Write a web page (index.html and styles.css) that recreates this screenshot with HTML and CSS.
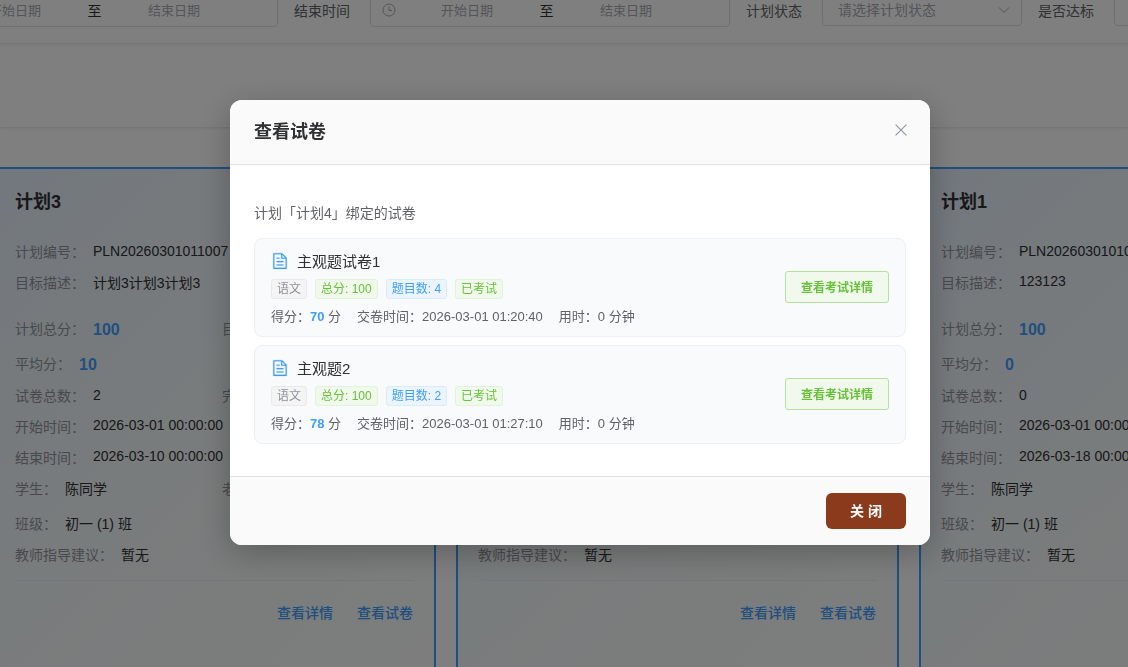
FILE: index.html
```html
<!DOCTYPE html>
<html lang="zh-CN">
<head>
    <meta charset="UTF-8">
    <meta name="viewport" content="width=device-width, initial-scale=1.0">
    <title>学习计划</title>
    <link rel="stylesheet" href="styles.css">
</head>
<body>
    <div class="page">
        <!-- 搜索栏 -->
        <div class="search-bar">
            <div class="date-range">
                <svg class="clock" viewBox="0 0 14 14"><circle cx="7" cy="7" r="6"/><path d="M7 3.5V7.5H10"/></svg>
                <span class="placeholder">开始日期</span>
                <span class="sep">至</span>
                <span class="placeholder">结束日期</span>
            </div>
            <label>结束时间</label>
            <div class="date-range">
                <svg class="clock" viewBox="0 0 14 14"><circle cx="7" cy="7" r="6"/><path d="M7 3.5V7.5H10"/></svg>
                <span class="placeholder">开始日期</span>
                <span class="sep">至</span>
                <span class="placeholder">结束日期</span>
            </div>
            <label>计划状态</label>
            <div class="select">
                <span>请选择计划状态</span>
                <svg class="arrow" viewBox="0 0 12 12"><path d="M1 3.5L6 8.5L11 3.5"/></svg>
            </div>
            <label>是否达标</label>
            <div class="select"></div>
        </div>
        <div class="toolbar"></div>

        <!-- 计划列表 -->
        <div class="cards">
            <div class="card">
                <h3>计划3</h3>
                <div class="row"><span class="label">计划编号：</span><span>PLN20260301011007</span></div>
                <div class="row desc"><span class="label">目标描述：</span><span>计划3计划3计划3</span></div>
                <div class="row score">
                    <div class="col"><span class="label">计划总分：</span><b>100</b></div>
                    <div class="col"><span class="label">目标分：</span></div>
                </div>
                <div class="row score"><span class="label">平均分：</span><b>10</b></div>
                <div class="row count">
                    <div class="col"><span class="label">试卷总数：</span><span>2</span></div>
                    <div class="col"><span class="label">完成数：</span></div>
                </div>
                <div class="row"><span class="label">开始时间：</span><span class="num">2026-03-01 00:00:00</span></div>
                <div class="row"><span class="label">结束时间：</span><span class="num">2026-03-10 00:00:00</span></div>
                <div class="row person">
                    <div class="col"><span class="label">学生：</span><span>陈同学</span></div>
                    <div class="col"><span class="label">老师：</span></div>
                </div>
                <div class="row"><span class="label">班级：</span><span>初一 (1) 班</span></div>
                <div class="row"><span class="label">教师指导建议：</span><span>暂无</span></div>
                <div class="actions"><a>查看详情</a><a>查看试卷</a></div>
            </div>
            <div class="card">
                <h3>计划4</h3>
                <div class="row"><span class="label">计划编号：</span></div>
                <div class="row desc"><span class="label">目标描述：</span></div>
                <div class="row score"><span class="label">计划总分：</span></div>
                <div class="row score"><span class="label">平均分：</span></div>
                <div class="row count"><span class="label">试卷总数：</span></div>
                <div class="row"><span class="label">开始时间：</span></div>
                <div class="row"><span class="label">结束时间：</span></div>
                <div class="row person"><span class="label">学生：</span></div>
                <div class="row"><span class="label">班级：</span></div>
                <div class="row"><span class="label">教师指导建议：</span><span>暂无</span></div>
                <div class="actions"><a>查看详情</a><a>查看试卷</a></div>
            </div>
            <div class="card">
                <h3>计划1</h3>
                <div class="row"><span class="label">计划编号：</span><span>PLN20260301010</span></div>
                <div class="row desc"><span class="label">目标描述：</span><span class="num">123123</span></div>
                <div class="row score"><span class="label">计划总分：</span><b>100</b></div>
                <div class="row score"><span class="label">平均分：</span><b>0</b></div>
                <div class="row count"><span class="label">试卷总数：</span><span>0</span></div>
                <div class="row"><span class="label">开始时间：</span><span class="num">2026-03-01 00:00:00</span></div>
                <div class="row"><span class="label">结束时间：</span><span class="num">2026-03-18 00:00:00</span></div>
                <div class="row person"><span class="label">学生：</span><span>陈同学</span></div>
                <div class="row"><span class="label">班级：</span><span>初一 (1) 班</span></div>
                <div class="row"><span class="label">教师指导建议：</span><span>暂无</span></div>
                <div class="actions"><a>查看详情</a><a>查看试卷</a></div>
            </div>
        </div>
    </div>

    <!-- 查看试卷弹窗 -->
    <div class="overlay">
        <div class="dialog">
            <div class="dialog-header">
                <h2>查看试卷</h2>
                <svg class="close" viewBox="0 0 12 12"><path d="M.6 .6L11.4 11.4M11.4 .6L.6 11.4"/></svg>
            </div>
            <div class="dialog-body">
                <p>计划「计划4」绑定的试卷</p>
                <div class="paper">
                    <div class="info">
                        <div class="name">
                            <svg viewBox="0 0 1024 1024"><path d="M832 384H576V128H192v768h640V384zm-26.5-64L640 154.500V320h165.500zM160 64h480l256 256v608a32 32 0 0 1-32 32H160a32 32 0 0 1-32-32V96a32 32 0 0 1 32-32zm160 448h384v64H320v-64zm0-192h160v64H320v-64zm0 384h384v64H320v-64z"/></svg>
                            <span>主观题试卷1</span>
                        </div>
                        <div class="tags">
                            <span class="tag">语文</span>
                            <span class="tag green">总分: 100</span>
                            <span class="tag blue">题目数: 4</span>
                            <span class="tag green">已考试</span>
                        </div>
                        <div class="result">
                            <span>得分：<b>70</b> 分</span>
                            <span>交卷时间：2026-03-01 01:20:40</span>
                            <span>用时：0 分钟</span>
                        </div>
                    </div>
                    <button class="btn-detail">查看考试详情</button>
                </div>
                <div class="paper">
                    <div class="info">
                        <div class="name">
                            <svg viewBox="0 0 1024 1024"><path d="M832 384H576V128H192v768h640V384zm-26.5-64L640 154.500V320h165.500zM160 64h480l256 256v608a32 32 0 0 1-32 32H160a32 32 0 0 1-32-32V96a32 32 0 0 1 32-32zm160 448h384v64H320v-64zm0-192h160v64H320v-64zm0 384h384v64H320v-64z"/></svg>
                            <span>主观题2</span>
                        </div>
                        <div class="tags">
                            <span class="tag">语文</span>
                            <span class="tag green">总分: 100</span>
                            <span class="tag blue">题目数: 2</span>
                            <span class="tag green">已考试</span>
                        </div>
                        <div class="result">
                            <span>得分：<b>78</b> 分</span>
                            <span>交卷时间：2026-03-01 01:27:10</span>
                            <span>用时：0 分钟</span>
                        </div>
                    </div>
                    <button class="btn-detail">查看考试详情</button>
                </div>
            </div>
            <div class="dialog-footer">
                <button class="btn-close">关 闭</button>
            </div>
        </div>
    </div>
</body>
</html>
```
FILE: styles.css
```css
* {
    box-sizing: border-box;
}
body {
    margin: 0;
    height: 667px;
    overflow: hidden;
    font-family: "Liberation Sans", "Noto Sans CJK SC", sans-serif;
    font-size: 14px;
    color: #303133;
    background-color: #fff;
}
h2, h3, p {
    margin: 0;
}
button {
    font-family: inherit;
    cursor: pointer;
}
.page {
    height: 667px;
    overflow: hidden;
}

/* 搜索栏 */
.search-bar {
    display: flex;
    align-items: flex-start;
    width: 1500px;
    height: 43px;
    margin-left: -82px;
    box-shadow: 0 1px 4px rgba(0, 0, 0, 0.12);
}
.search-bar label {
    width: 92px;
    padding-left: 16px;
    line-height: 22px;
    color: #606266;
    flex-shrink: 0;
}
.date-range {
    display: flex;
    align-items: center;
    width: 360px;
    height: 33px;
    margin-top: -6px;
    padding: 0 0 2px 11px;
    border: 1px solid #dcdfe6;
    border-radius: 4px;
    font-size: 13px;
    flex-shrink: 0;
}
.date-range .placeholder {
    width: 142px;
    text-align: center;
    color: #a8abb2;
}
.date-range .sep {
    width: 17px;
    text-align: center;
    font-size: 14px;
}
.clock {
    width: 14px;
    height: 14px;
    fill: none;
    stroke: #a8abb2;
}
.select {
    display: flex;
    align-items: center;
    justify-content: space-between;
    width: 200px;
    height: 32px;
    margin-top: -6px;
    padding: 0 11px 2px 15px;
    border: 1px solid #dcdfe6;
    border-radius: 4px;
    color: #a8abb2;
    flex-shrink: 0;
}
.arrow {
    width: 12px;
    height: 12px;
    margin-top: 2px;
    fill: none;
    stroke: #a8abb2;
}
.toolbar {
    height: 84px;
    box-shadow: 0 1px 3px rgba(0, 0, 0, 0.12);
}

/* 计划卡片 */
.cards {
    display: grid;
    grid-template-columns: repeat(3, 443px);
    gap: 20px;
    margin: 40px 0 0 -7px;
}
.card {
    height: 540px;
    padding: 20px;
    border: 2px solid #409eff;
    background: linear-gradient(135deg, #e6f0fc 0%, #f3f9f9 50%, #fbfbfb 100%);
}
.card h3 {
    height: 46px;
    font-size: 18px;
    line-height: 26px;
}
.row {
    display: flex;
    align-items: center;
    height: 31px;
}
.row.desc {
    margin-bottom: 13px;
}
.row.score {
    height: 35px;
}
.row.count {
    height: 30px;
}
.row.person {
    margin-bottom: 4px;
}
.row .label {
    margin-right: 8px;
    color: #909399;
}
.row .num {
    padding-bottom: 1px;
}
.row b {
    padding-top: 4px;
    font-size: 16px;
    color: #409eff;
}
.col {
    display: flex;
    align-items: center;
    width: 207px;
    flex-shrink: 0;
    white-space: nowrap;
}
.actions {
    display: flex;
    justify-content: flex-end;
    gap: 24px;
    margin-top: 11px;
    padding: 21px 1px 0 0;
    border-top: 1px solid #ebeef5;
    font-weight: 500;
    color: #409eff;
}

/* 弹窗 */
.overlay {
    position: fixed;
    inset: 0;
    padding: 100px 0 0 230px;
    background-color: rgba(0, 0, 0, 0.5);
}
.dialog {
    width: 700px;
    overflow: hidden;
    border-radius: 12px;
    background-color: #fff;
    box-shadow: 0 8px 32px rgba(0, 0, 0, 0.25);
}
.dialog-header {
    display: flex;
    align-items: center;
    justify-content: space-between;
    height: 65px;
    padding: 0 23px 4px 24px;
    border-bottom: 1px solid #e0e0e0;
    background-color: #fafafa;
}
.dialog-header h2 {
    font-size: 18px;
    color: #303133;
}
.close {
    width: 12px;
    height: 12px;
    margin-bottom: 1px;
    fill: none;
    stroke: #909399;
    stroke-width: 1.1;
}
.dialog-body {
    height: 311px;
    padding: 38px 24px 0;
}
.dialog-body p {
    height: 35px;
    line-height: 20px;
    color: #606266;
}
.paper {
    display: flex;
    align-items: center;
    justify-content: space-between;
    height: 99px;
    margin-bottom: 8px;
    padding: 0 16px;
    border: 1px solid #ebeef5;
    border-radius: 8px;
    background-color: #f8fafc;
}
.info {
    padding-top: 2px;
}
.name {
    display: flex;
    align-items: center;
    gap: 8px;
    height: 20px;
    font-size: 15px;
}
.name svg {
    width: 18px;
    height: 18px;
    fill: #409eff;
    stroke: #409eff;
    stroke-width: 12;
}
.tags {
    display: flex;
    gap: 8px;
    margin: 8px 0 8px;
}
.tag {
    height: 20px;
    padding: 0 5px;
    border: 1px solid #e9e9eb;
    border-radius: 3px;
    font-size: 12px;
    line-height: 18px;
    color: #909399;
    background-color: #f4f4f5;
}
.tag.green {
    color: #67c23a;
    border-color: #e1f3d8;
    background-color: #f0f9eb;
}
.tag.blue {
    color: #409eff;
    border-color: #d9ecff;
    background-color: #ecf5ff;
}
.result {
    display: flex;
    gap: 16px;
    font-size: 13px;
    line-height: 20px;
    color: #606266;
}
.result b {
    color: #409eff;
}
.btn-detail {
    width: 104px;
    height: 32px;
    margin-bottom: 2px;
    padding: 0 0 1px;
    border: 1px solid #b3e19d;
    border-radius: 3px;
    font-size: 12px;
    font-weight: bold;
    color: #67c23a;
    background-color: #f0f9eb;
}
.dialog-footer {
    display: flex;
    align-items: center;
    justify-content: flex-end;
    height: 69px;
    padding: 0 24px;
    border-top: 1px solid #e0e0e0;
    background-color: #fafafa;
}
.btn-close {
    width: 80px;
    height: 36px;
    padding: 0 0 3px;
    border: none;
    border-radius: 6px;
    font-size: 14px;
    font-weight: bold;
    color: #fff;
    background-color: #8b3a1c;
}
```
